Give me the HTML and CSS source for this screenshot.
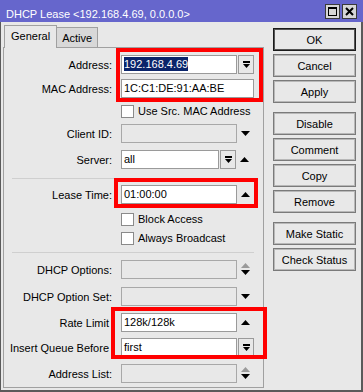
FILE: index.html
```html
<!DOCTYPE html>
<html lang="en">

<head>
    <meta charset="UTF-8">
    <title>DHCP Lease</title>
    <link rel="stylesheet" href="styles.css">
</head>

<body>
    <div class="window">
        <div class="titlebar">
            <span class="title">DHCP Lease &lt;192.168.4.69, 0.0.0.0&gt;</span>
            <div class="title-buttons">
                <span class="tbtn">
                    <svg width="13" height="13" viewBox="0 0 13 13"><rect x="2.5" y="2.5" width="8" height="8" fill="none" stroke="#000"/><rect x="2" y="2" width="9" height="2" fill="#000"/></svg>
                </span>
                <span class="tbtn">
                    <svg width="13" height="13" viewBox="0 0 13 13"><path d="M3 3 L10 10 M10 3 L3 10" stroke="#000" stroke-width="2"/></svg>
                </span>
            </div>
        </div>

        <div class="content">
            <div class="main">
                <div class="tabs">
                    <div class="tab current">General</div>
                    <div class="tab">Active</div>
                </div>

                <div class="panel">
                    <div class="row m7">
                        <span class="lbl">Address:</span>
                        <div class="fields">
                            <div class="field"><span class="sel">192.168.4.69</span></div>
                            <span class="drop"><svg width="9" height="8" viewBox="0 0 9 8"><rect x="1" y="0" width="7" height="2"/><polygon points="1,3 8,3 4.5,7"/></svg></span>
                        </div>
                    </div>
                    <div class="row m5">
                        <span class="lbl">MAC Address:</span>
                        <div class="fields">
                            <div class="field">1C:C1:DE:91:AA:BE</div>
                        </div>
                    </div>
                    <div class="row check m5">
                        <span class="box"></span>Use Src. MAC Address
                    </div>
                    <div class="row m5">
                        <span class="lbl">Client ID:</span>
                        <div class="fields">
                            <div class="field off"></div>
                            <span class="slot"><svg width="9" height="5" viewBox="0 0 9 5"><polygon points="0,0 9,0 4.5,5"/></svg></span>
                        </div>
                    </div>
                    <div class="row m7">
                        <span class="lbl">Server:</span>
                        <div class="fields">
                            <div class="field short">all</div>
                            <span class="drop"><svg width="9" height="8" viewBox="0 0 9 8"><rect x="1" y="0" width="7" height="2"/><polygon points="1,3 8,3 4.5,7"/></svg></span>
                            <span class="slot"><svg width="9" height="5" viewBox="0 0 9 5"><polygon points="0,5 9,5 4.5,0"/></svg></span>
                        </div>
                    </div>

                    <div class="sep m9"></div>

                    <div class="row m6">
                        <span class="lbl">Lease Time:</span>
                        <div class="fields">
                            <div class="field">01:00:00</div>
                            <span class="slot"><svg width="9" height="5" viewBox="0 0 9 5"><polygon points="0,5 9,5 4.5,0"/></svg></span>
                        </div>
                    </div>
                    <div class="row check m7">
                        <span class="box"></span>Block Access
                    </div>
                    <div class="row check m3">
                        <span class="box"></span>Always Broadcast
                    </div>

                    <div class="sep m6"></div>

                    <div class="row m7">
                        <span class="lbl">DHCP Options:</span>
                        <div class="fields">
                            <div class="field off"></div>
                            <span class="slot updown"><svg width="9" height="13" viewBox="0 0 9 13"><polygon points="0,5 9,5 4.5,0" fill="#9a9a9a"/><polygon points="0,7 9,7 4.5,12"/></svg></span>
                        </div>
                    </div>
                    <div class="row m8">
                        <span class="lbl">DHCP Option Set:</span>
                        <div class="fields">
                            <div class="field off"></div>
                            <span class="slot"><svg width="9" height="5" viewBox="0 0 9 5"><polygon points="0,0 9,0 4.5,5"/></svg></span>
                        </div>
                    </div>
                    <div class="row m7">
                        <span class="lbl nocolon">Rate Limit</span>
                        <div class="fields">
                            <div class="field">128k/128k</div>
                            <span class="slot"><svg width="9" height="5" viewBox="0 0 9 5"><polygon points="0,5 9,5 4.5,0"/></svg></span>
                        </div>
                    </div>
                    <div class="row m6">
                        <span class="lbl nocolon">Insert Queue Before</span>
                        <div class="fields">
                            <div class="field">first</div>
                            <span class="drop"><svg width="9" height="8" viewBox="0 0 9 8"><rect x="1" y="0" width="7" height="2"/><polygon points="1,3 8,3 4.5,7"/></svg></span>
                        </div>
                    </div>
                    <div class="row m7">
                        <span class="lbl">Address List:</span>
                        <div class="fields">
                            <div class="field off"></div>
                            <span class="slot updown"><svg width="9" height="13" viewBox="0 0 9 13"><polygon points="0,5 9,5 4.5,0" fill="#9a9a9a"/><polygon points="0,7 9,7 4.5,12"/></svg></span>
                        </div>
                    </div>
                </div>
            </div>

            <div class="actions">
                <div class="group">
                    <button class="btn default">OK</button>
                    <button class="btn">Cancel</button>
                    <button class="btn">Apply</button>
                </div>
                <div class="group">
                    <button class="btn">Disable</button>
                    <button class="btn">Comment</button>
                    <button class="btn">Copy</button>
                    <button class="btn">Remove</button>
                </div>
                <div class="group">
                    <button class="btn">Make Static</button>
                    <button class="btn">Check Status</button>
                </div>
            </div>
        </div>

        <!-- red highlight frames drawn over the form -->
        <div class="mark mark-address"></div>
        <div class="mark mark-lease"></div>
        <div class="mark mark-queue"></div>
    </div>
</body>

</html>
```

FILE: styles.css
```css
* {
    box-sizing: border-box;
}

body {
    margin: 0;
    font-family: "Liberation Sans", Arial, sans-serif;
    font-size: 11px;
    color: #000;
}

.window {
    position: relative;
    width: 363px;
    height: 392px;
    background: #e8e8e8;
    display: flex;
    flex-direction: column;
}

.titlebar {
    height: 22px;
    background: #6666cc;
    color: #fff;
    display: flex;
    align-items: flex-start;
    padding-left: 6px;
}

.title {
    margin-top: 8px;
    line-height: 13px;
}

.title-buttons {
    margin-left: auto;
    margin-top: 4px;
    margin-right: 6px;
    display: flex;
    gap: 2px;
}

.tbtn {
    width: 15px;
    height: 15px;
    background: #d6d6d6;
    border: 1px solid #3a3a3a;
    display: flex;
}

.content {
    flex: 1;
    display: flex;
    border: solid #5a5a5a;
    border-width: 0 2px 2px 1px;
    padding: 3px 5px 2px 2px;
}

.main {
    width: 261px;
    display: flex;
    flex-direction: column;
}

.tabs {
    display: flex;
    align-items: flex-end;
    height: 22px;
    padding-left: 1px;
}

.tab {
    height: 20px;
    line-height: 20px;
    padding: 0 5px;
    border: 1px solid #a0a0a0;
    border-bottom: 0;
    background: #d8d8d8;
}

.tab.current {
    height: 23px;
    margin-bottom: -1px;
    padding: 0 6px;
    background: #e8e8e8;
    position: relative;
    z-index: 1;
}

.tab + .tab {
    border-left: 0;
}

.panel {
    flex: 1;
    border: 1px solid #a0a0a0;
}

.row {
    display: flex;
    align-items: center;
    height: 19px;
}

.m3 { margin-top: 3px; }
.m5 { margin-top: 5px; }
.m6 { margin-top: 6px; }
.m7 { margin-top: 7px; }
.m8 { margin-top: 8px; }
.m9 { margin-top: 9px; }

.lbl {
    width: 108px;
    margin-right: 9px;
    text-align: right;
    white-space: nowrap;
}

.lbl.nocolon {
    width: 105px;
    margin-right: 12px;
}

.fields {
    width: 133px;
    height: 19px;
    display: flex;
}

.field {
    flex: 1;
    height: 19px;
    background: #fff;
    border: 1px solid #9a9a9a;
    padding-left: 2px;
    line-height: 17px;
    white-space: nowrap;
}

.field.short {
    flex: none;
    width: 98px;
}

.field.off {
    background: #e8e8e8;
    border-color: #a8a8a8;
}

.sel {
    background: #0a246a;
    color: #fff;
    padding: 1px 0;
}

.drop {
    width: 16px;
    height: 19px;
    margin-left: 1px;
    border: 1px solid #9a9a9a;
    background: #e8e8e8;
    display: flex;
    align-items: center;
    justify-content: center;
}

.slot {
    width: 17px;
    display: flex;
    align-items: center;
    justify-content: center;
}

.row.check {
    height: 16px;
    padding-left: 117px;
}

.box {
    width: 13px;
    height: 13px;
    background: #fff;
    border: 1px solid #8a8a8a;
    margin-right: 4px;
}

.sep {
    margin-left: 8px;
    margin-right: 9px;
    border-top: 1px solid #cfcfcf;
}

.actions {
    width: 83px;
    margin-left: 9px;
    margin-top: 3px;
    display: flex;
    flex-direction: column;
    gap: 9px;
}

.group {
    display: flex;
    flex-direction: column;
    gap: 3px;
}

.btn {
    height: 23px;
    padding: 0;
    font: inherit;
    color: #000;
    background: #e8e8e8;
    border: 1px solid #7a7a7a;
    box-shadow: inset 0 0 0 1px #b8b8b8;
}

.btn.default {
    border-color: #1a1a1a;
    box-shadow: inset 0 0 0 1px #555;
}

.mark {
    position: absolute;
    border: 4px solid #ff0000;
}

.mark-address {
    left: 116px;
    top: 48px;
    width: 147px;
    height: 54px;
}

.mark-lease {
    left: 114px;
    top: 178px;
    width: 144px;
    height: 30px;
}

.mark-queue {
    left: 111px;
    top: 307px;
    width: 156px;
    height: 52px;
}
```
